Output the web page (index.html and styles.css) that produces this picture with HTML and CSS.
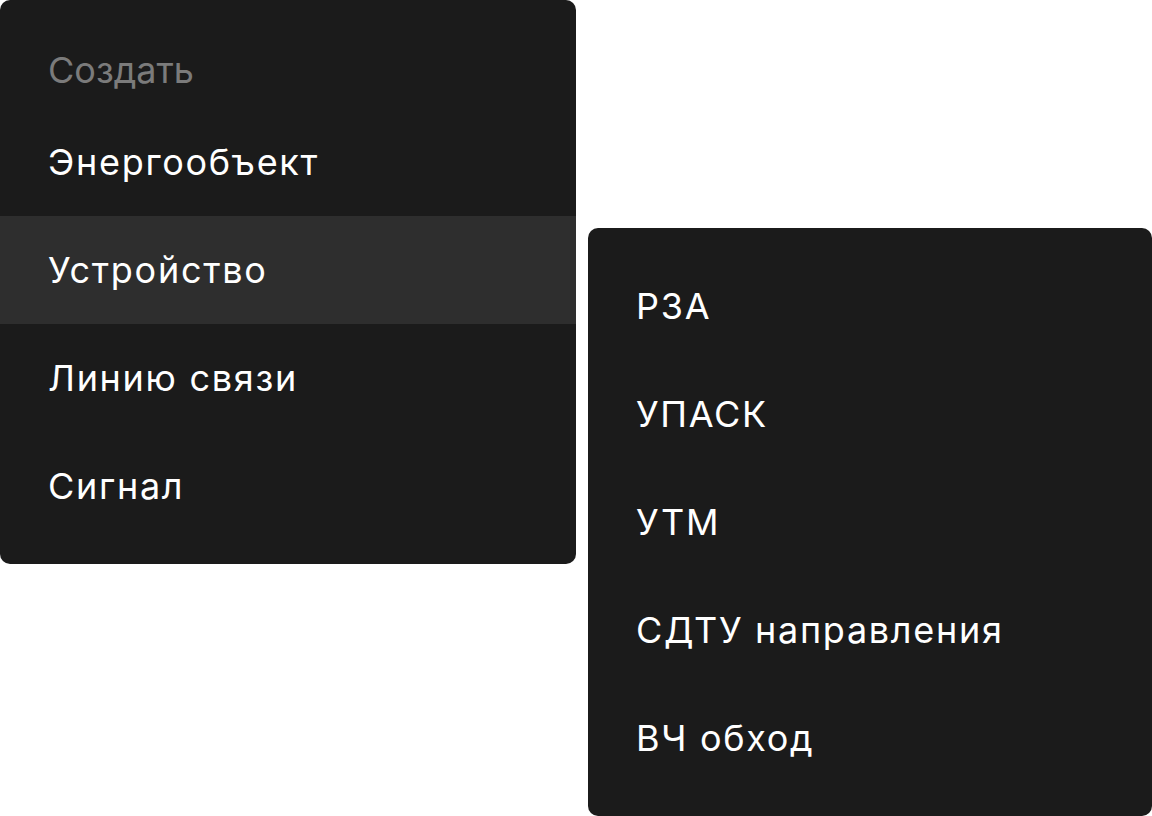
FILE: index.html
```html
<!DOCTYPE html>
<html lang="ru">
<head>
  <meta charset="UTF-8">
  <meta name="viewport" content="width=device-width, initial-scale=1.0">
  <title>Создать</title>
  <link rel="stylesheet" href="styles.css">
</head>
<body>
  <div class="menus">
    <div class="menu">
      <div class="menu-title">Создать</div>
      <div class="menu-item">Энергообъект</div>
      <div class="menu-item active">Устройство</div>
      <div class="menu-item">Линию связи</div>
      <div class="menu-item">Сигнал</div>
    </div>

    <div class="menu submenu">
      <div class="menu-item">РЗА</div>
      <div class="menu-item">УПАСК</div>
      <div class="menu-item">УТМ</div>
      <div class="menu-item">СДТУ направления</div>
      <div class="menu-item">ВЧ обход</div>
    </div>
  </div>
</body>
</html>
```

FILE: styles.css
```css
body {
  margin: 0;
  background: #fff;
  font-family: 'Inter', 'Noto Sans', sans-serif;
}

.menus {
  display: flex;
  align-items: flex-start;
  gap: 12px;
}

.menu {
  flex-shrink: 0;
  width: 576px;
  background-color: #1b1b1b;
  border-radius: 10px;
  padding: 24px 0;
}

.submenu {
  width: 564px;
  margin-top: 228px;
}

.menu-title,
.menu-item {
  display: flex;
  align-items: center;
  padding: 0 48px;
  font-size: 36px;
  font-weight: 380;
}

.menu-title {
  height: 76px;
  padding-top: 8px;
  color: #7b7b7b;
}

.menu-item {
  height: 108px;
  color: #fff;
  letter-spacing: 1.7px;
}

.menu-item.active {
  background-color: #2e2e2e;
}
```
